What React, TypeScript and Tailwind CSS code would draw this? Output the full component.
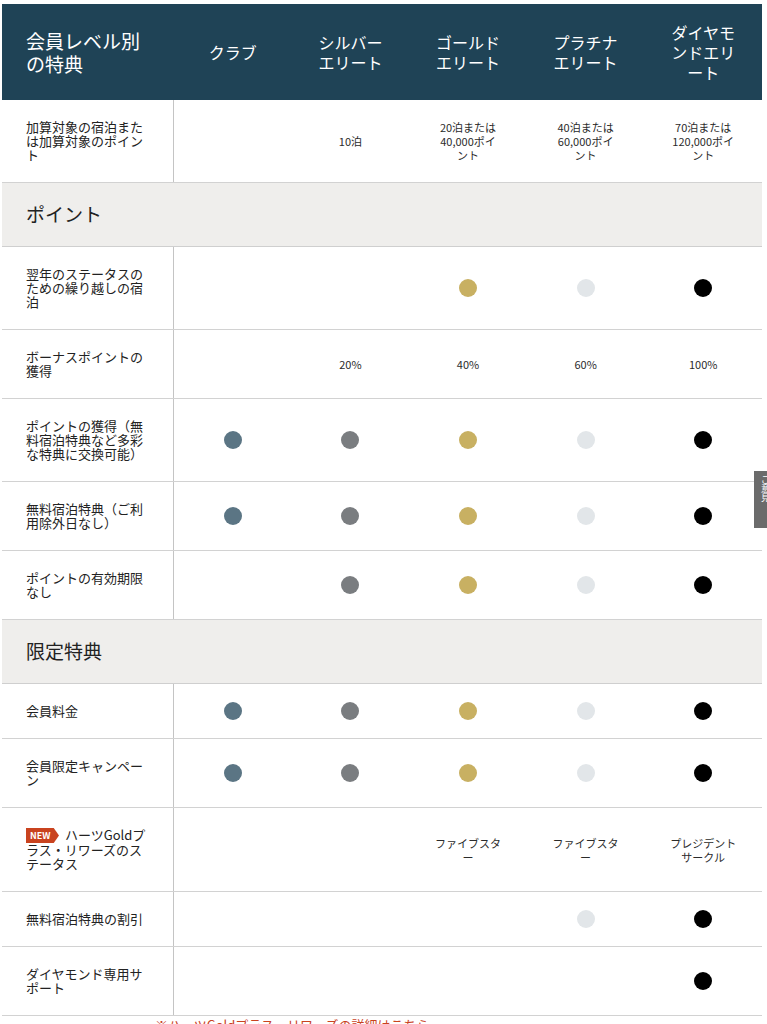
import React from 'react';

type Cell = string | 'club' | 'silver' | 'gold' | 'plat' | 'dia' | null;

type Row =
  | { kind: 'section'; title: string }
  | { kind: 'row'; label: string; isNew?: boolean; cells: Cell[] };

const dotColors: Record<string, string> = {
  club: 'bg-[#5b7584]',
  silver: 'bg-[#7a7d80]',
  gold: 'bg-[#c8b062]',
  plat: 'bg-[#e2e6e9]',
  dia: 'bg-black',
};

const allDots: Cell[] = ['club', 'silver', 'gold', 'plat', 'dia'];

const rows: Row[] = [
  {
    kind: 'row',
    label: '加算対象の宿泊または加算対象のポイント',
    cells: [null, '10泊', '20泊または\n40,000ポイ\nント', '40泊または\n60,000ポイ\nント', '70泊または\n120,000ポイ\nント'],
  },
  { kind: 'section', title: 'ポイント' },
  { kind: 'row', label: '翌年のステータスのための繰り越しの宿泊', cells: [null, null, 'gold', 'plat', 'dia'] },
  { kind: 'row', label: 'ボーナスポイントの獲得', cells: [null, '20%', '40%', '60%', '100%'] },
  { kind: 'row', label: 'ポイントの獲得（無料宿泊特典など多彩な特典に交換可能）', cells: allDots },
  { kind: 'row', label: '無料宿泊特典（ご利用除外日なし）', cells: allDots },
  { kind: 'row', label: 'ポイントの有効期限なし', cells: [null, 'silver', 'gold', 'plat', 'dia'] },
  { kind: 'section', title: '限定特典' },
  { kind: 'row', label: '会員料金', cells: allDots },
  { kind: 'row', label: '会員限定キャンペーン', cells: allDots },
  {
    kind: 'row',
    label: 'ハーツGoldプラス・リワーズのステータス',
    isNew: true,
    cells: [null, null, 'ファイブスタ\nー', 'ファイブスタ\nー', 'プレジデント\nサークル'],
  },
  { kind: 'row', label: '無料宿泊特典の割引', cells: [null, null, null, 'plat', 'dia'] },
  { kind: 'row', label: 'ダイヤモンド専用サポート', cells: [null, null, null, null, 'dia'] },
];

const tiers = ['クラブ', 'シルバー\nエリート', 'ゴールド\nエリート', 'プラチナ\nエリート', 'ダイヤモ\nンドエリ\nート'];

function CellContent({ cell }: { cell: Cell }) {
  if (!cell) return null;
  if (cell in dotColors) {
    return <span className={`block w-[18px] h-[18px] rounded-full ${dotColors[cell]}`} />;
  }
  return <span className="whitespace-pre-line text-center text-[11px] leading-[14px] text-[#2b2b2b]">{cell}</span>;
}

export default function App() {
  return (
    <div
      className="relative w-[767px] h-[1024px] overflow-hidden bg-white"
      style={{ fontFamily: '"Noto Sans CJK JP", "Noto Sans", sans-serif' }}
    >
      <div className="ml-[2px] mt-[4px] w-[760px]">
        {/* header */}
        <div className="grid grid-cols-[172px_repeat(5,1fr)] h-[96px] bg-[#1f4356] text-white">
          <div className="flex items-center pl-6 text-[19px] leading-[23px]">
            <span className="w-[120px]">会員レベル別の特典</span>
          </div>
          {tiers.map(t => (
            <div key={t} className="flex items-center justify-center">
              <span className="whitespace-pre-line text-center text-[16px] leading-[20px]">{t}</span>
            </div>
          ))}
        </div>

        {rows.map((r, i) =>
          r.kind === 'section' ? (
            <div
              key={i}
              className="flex items-center h-[64px] pl-6 bg-[#efeeec] border-b border-[#cfcfcf] text-[19px] text-[#222]"
            >
              {r.title}
            </div>
          ) : (
            <div key={i} className="grid grid-cols-[172px_repeat(5,1fr)] border-b border-[#d2d2d2]">
              <div className="flex items-center pl-6 py-5 border-r border-[#c4c4c4]">
                <span className="w-[120px] text-[13px] leading-[14px] text-[#222]">
                  {r.isNew && (
                    <span className="inline-flex items-center align-[1px] mr-[6px] h-[15px] w-[33px] pl-[4px] bg-[#c9431f] text-white text-[9px] font-bold leading-none [clip-path:polygon(0_0,84%_0,100%_50%,84%_100%,0_100%)]">
                      NEW
                    </span>
                  )}
                  {r.label}
                </span>
              </div>
              {r.cells.map((c, j) => (
                <div key={j} className="flex items-center justify-center">
                  <CellContent cell={c} />
                </div>
              ))}
            </div>
          )
        )}

        <div className="pl-[153px] pt-[1px] text-[13px] leading-[16px] text-[#c9431f]">
          ※ハーツGoldプラス・リワーズの詳細はこちら
        </div>
      </div>

      {/* feedback tab */}
      <div className="absolute right-0 top-[471px] w-[13px] h-[57px] bg-[#6b6b6b] overflow-hidden">
        <span className="absolute left-[6px] top-[4px] text-[9px] leading-[10px] text-white [writing-mode:vertical-rl]">
          ご意見
        </span>
      </div>
    </div>
  );
}
